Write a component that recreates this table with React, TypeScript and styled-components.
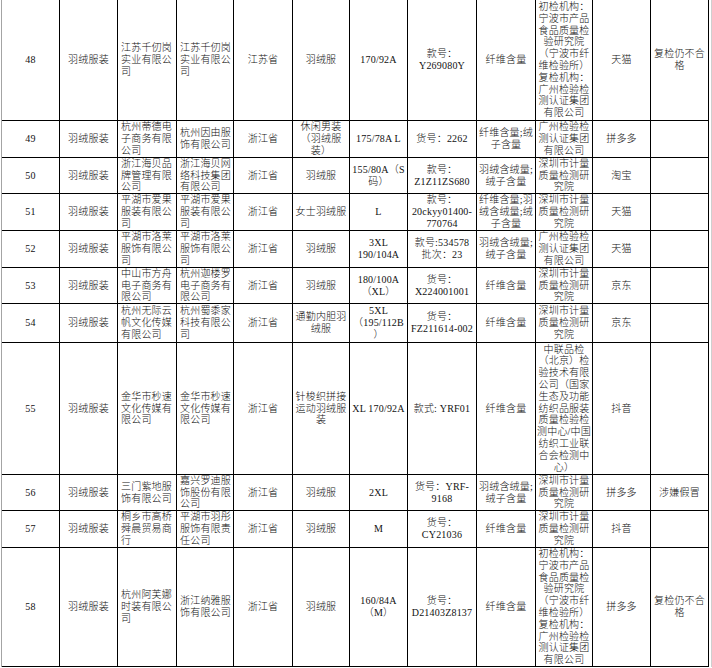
import React from 'react';
import styled, { createGlobalStyle } from 'styled-components';

type Align = 'left' | 'center';

interface IRecord {
  height: number;
  cells: string[];
}

const columns: { width: number; align: Align }[] = [
  { width: 58, align: 'center' },
  { width: 58, align: 'center' },
  { width: 59, align: 'left' },
  { width: 57, align: 'left' },
  { width: 59, align: 'center' },
  { width: 57, align: 'center' },
  { width: 58, align: 'center' },
  { width: 69, align: 'center' },
  { width: 59, align: 'center' },
  { width: 57, align: 'center' },
  { width: 58, align: 'center' },
  { width: 58, align: 'center' },
];

const recheckLab =
  '初检机构：\n宁波市产品\n食品质量检\n验研究院\n（宁波市纤\n维检验所）\n复检机构：\n广州检验检\n测认证集团\n有限公司';
const szLab = '深圳市计量\n质量检测研\n究院';
const gzLab = '广州检验检\n测认证集团\n有限公司';

const records: IRecord[] = [
  {
    height: 121,
    cells: ['48', '羽绒服装', '江苏千仞岗\n实业有限公\n司', '江苏千仞岗\n实业有限公\n司', '江苏省', '羽绒服', '170/92A', '款号：\nY269080Y', '纤维含量', recheckLab, '天猫', '复检仍不合\n格'],
  },
  {
    height: 37,
    cells: ['49', '羽绒服装', '杭州蒂德电\n子商务有限\n公司', '杭州因由服\n饰有限公司', '浙江省', '休闲男装\n（羽绒服\n装）', '175/78A L', '货号：2262', '纤维含量;绒\n子含量', gzLab, '拼多多', ''],
  },
  {
    height: 36,
    cells: ['50', '羽绒服装', '浙江海贝品\n牌管理有限\n公司', '浙江海贝网\n络科技集团\n有限公司', '浙江省', '羽绒服', '155/80A（S\n码）', '款号：\nZ1Z11ZS680', '羽绒含绒量;\n绒子含量', szLab, '淘宝', ''],
  },
  {
    height: 37,
    cells: ['51', '羽绒服装', '平湖市爱果\n服装有限公\n司', '平湖市爱果\n服装有限公\n司', '浙江省', '女士羽绒服', 'L', '款号：\n20ckyy01400-\n770764', '纤维含量;羽\n绒含绒量;绒\n子含量', szLab, '天猫', ''],
  },
  {
    height: 37,
    cells: ['52', '羽绒服装', '平湖市洛莱\n服饰有限公\n司', '平湖市洛莱\n服饰有限公\n司', '浙江省', '羽绒服', '3XL\n190/104A', '款号:534578\n批次：23', '羽绒含绒量;\n绒子含量', gzLab, '天猫', ''],
  },
  {
    height: 36,
    cells: ['53', '羽绒服装', '中山市方舟\n电子商务有\n限公司', '杭州迦楼罗\n电子商务有\n限公司', '浙江省', '羽绒服', '180/100A\n（XL）', '货号：\nX224001001', '纤维含量', szLab, '京东', ''],
  },
  {
    height: 39,
    cells: ['54', '羽绒服装', '杭州无际云\n帆文化传媒\n有限公司', '杭州蜀黍家\n科技有限公\n司', '浙江省', '通勤内胆羽\n绒服', '5XL\n（195/112B\n）', '货号：\nFZ211614-002', '纤维含量', szLab, '京东', ''],
  },
  {
    height: 132,
    cells: [
      '55', '羽绒服装', '金华市秒速\n文化传媒有\n限公司', '金华市秒速\n文化传媒有\n限公司', '浙江省', '针梭织拼接\n运动羽绒服\n装', 'XL 170/92A', '款式: YRF01', '纤维含量',
      '中联品检\n（北京）检\n验技术有限\n公司（国家\n生态及功能\n纺织品服装\n质量检验检\n测中心/中国\n纺织工业联\n合会检测中\n心）',
      '抖音', '',
    ],
  },
  {
    height: 36,
    cells: ['56', '羽绒服装', '三门紫地服\n饰有限公司', '嘉兴罗迪服\n饰股份有限\n公司', '浙江省', '羽绒服', '2XL', '货号：YRF-\n9168', '羽绒含绒量;\n绒子含量', szLab, '拼多多', '涉嫌假冒'],
  },
  {
    height: 37,
    cells: ['57', '羽绒服装', '桐乡市高桥\n舜晨贸易商\n行', '平湖市羽彤\n服饰有限责\n任公司', '浙江省', '羽绒服', 'M', '货号：\nCY21036', '纤维含量', szLab, '抖音', ''],
  },
  {
    height: 119,
    cells: ['58', '羽绒服装', '杭州阿芙娜\n时装有限公\n司', '浙江纳雅服\n饰有限公司', '浙江省', '羽绒服', '160/84A\n（M）', '货号：\nD21403Z8137', '纤维含量', recheckLab, '拼多多', '复检仍不合\n格'],
  },
];

const GlobalStyle = createGlobalStyle`
  html, body {
    margin: 0;
    background: #ffffff;
  }
`;

export default function App() {
  return (
    <>
      <GlobalStyle />
      <Sheet>
        {records.map((record) => (
          <Row key={record.cells[0]} $height={record.height}>
            {record.cells.map((text, i) => (
              <Cell key={i} $align={columns[i].align}>
                <CellText $align={columns[i].align}>{text}</CellText>
              </Cell>
            ))}
          </Row>
        ))}
      </Sheet>
    </>
  );
}

const Sheet = styled.div`
  width: fit-content;
  margin-left: 1px;
  padding-right: 2px;
  border-left: 1px solid #a4a4a4;
  border-right: 1px solid #cfcfcf;
  display: flex;
  flex-direction: column;

  font-family: 'Liberation Serif', 'Noto Sans CJK SC', serif;
  font-size: 10px;
  font-weight: 300;
  letter-spacing: 0.2px;
  line-height: 11.8px;
  color: #111;
`;

const Row = styled.div<{ $height: number }>`
  display: grid;
  grid-template-columns: ${columns.map((c) => `${c.width}px`).join(' ')};
  height: ${({ $height }) => $height}px;
`;

const Cell = styled.div<{ $align: Align }>`
  box-sizing: border-box;
  display: flex;
  align-items: center;
  justify-content: ${({ $align }) => ($align === 'left' ? 'flex-start' : 'center')};
  padding: ${({ $align }) => ($align === 'left' ? '0 1px 0 3px' : '0')};
  border-right: 1px solid #000;
  border-bottom: 1px solid #000;
  overflow: hidden;
`;

const CellText = styled.span<{ $align: Align }>`
  white-space: pre;
  text-align: ${({ $align }) => $align};
`;
